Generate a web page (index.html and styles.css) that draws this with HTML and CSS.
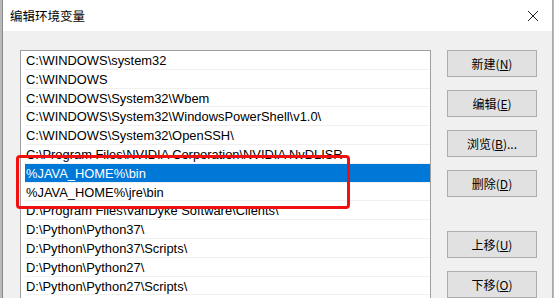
FILE: index.html
```html
<!DOCTYPE html>
<html lang="zh-CN">

<head>
    <meta charset="UTF-8">
    <title>编辑环境变量</title>
    <link rel="stylesheet" href="styles.css">
</head>

<body>
    <div class="dialog">
        <div class="titlebar">
            <span class="title">编辑环境变量</span>
            <svg class="close" width="12" height="12" viewBox="0 0 12 12">
                <path d="M1 1 L11 11 M11 1 L1 11" stroke="#222" stroke-width="1" fill="none"/>
            </svg>
        </div>
        <div class="content">
            <div class="listWrap">
                <div class="list">
                    <div class="row">C:\WINDOWS\system32</div>
                    <div class="row">C:\WINDOWS</div>
                    <div class="row">C:\WINDOWS\System32\Wbem</div>
                    <div class="row">C:\WINDOWS\System32\WindowsPowerShell\v1.0\</div>
                    <div class="row">C:\WINDOWS\System32\OpenSSH\</div>
                    <div class="row">C:\Program Files\NVIDIA Corporation\NVIDIA NvDLISR</div>
                    <div class="row selected">%JAVA_HOME%\bin</div>
                    <div class="row">%JAVA_HOME%\jre\bin</div>
                    <div class="row">D:\Program Files\VanDyke Software\Clients\</div>
                    <div class="row">D:\Python\Python37\</div>
                    <div class="row">D:\Python\Python37\Scripts\</div>
                    <div class="row">D:\Python\Python27\</div>
                    <div class="row">D:\Python\Python27\Scripts\</div>
                </div>
                <!-- red marker drawn over the list -->
                <div class="marker"></div>
            </div>
            <div class="buttons">
                <button class="btn">新建(<u>N</u>)</button>
                <button class="btn">编辑(<u>E</u>)</button>
                <button class="btn">浏览(<u>B</u>)...</button>
                <button class="btn">删除(<u>D</u>)</button>
                <button class="btn spaced">上移(<u>U</u>)</button>
                <button class="btn">下移(<u>O</u>)</button>
            </div>
        </div>
    </div>
</body>

</html>
```

FILE: styles.css
```css
body {
    margin: 0;
    height: 298px;
    overflow: hidden;
    background-color: #b9b9b9;
    font-family: "Liberation Sans", "Noto Sans CJK SC", sans-serif;
}

.dialog {
    margin-left: 2px;
    width: 549px;
    height: 298px;
    border-left: 1px solid #8a8a8a;
    border-right: 1px solid #a8a8a8;
    background-color: #f0f0f0;
}

.titlebar {
    display: flex;
    justify-content: space-between;
    align-items: center;
    height: 31px;
    background-color: #ffffff;
    padding: 0 13px 0 7px;
}

.title {
    font-family: "Noto Sans CJK SC", sans-serif;
    font-size: 12.5px;
    color: #000;
}

.content {
    display: flex;
    padding: 19px 0 0 17px;
    gap: 16px;
}

.listWrap {
    position: relative;
    width: 409px;
    height: 260px;
    border: 1px solid #a0a0a0;
    border-bottom: none;
    background-color: #ffffff;
}

.list {
    height: 100%;
    overflow: hidden;
}

.row {
    height: 18.8px;
    line-height: 19px;
    margin-left: 4px;
    padding-left: 1px;
    font-size: 12.9px;
    color: #000;
    border-bottom: 0.8px solid #f0f0f0;
    box-sizing: border-box;
    white-space: nowrap;
    overflow: hidden;
}

.row.selected {
    background-color: #0078d7;
    color: #ffffff;
}

.marker {
    position: absolute;
    left: -5px;
    top: 104px;
    width: 328px;
    height: 48px;
    border: 3px solid #f01010;
    border-radius: 4px;
}

.buttons {
    display: flex;
    flex-direction: column;
    gap: 13px;
}

.btn {
    width: 90px;
    height: 27px;
    padding: 0;
    background-color: #e1e1e1;
    border: 1px solid #adadad;
    font-family: "Noto Sans CJK SC", sans-serif;
    font-size: 12px;
    color: #000;
}

.btn.spaced {
    margin-top: 21px;
}
```
